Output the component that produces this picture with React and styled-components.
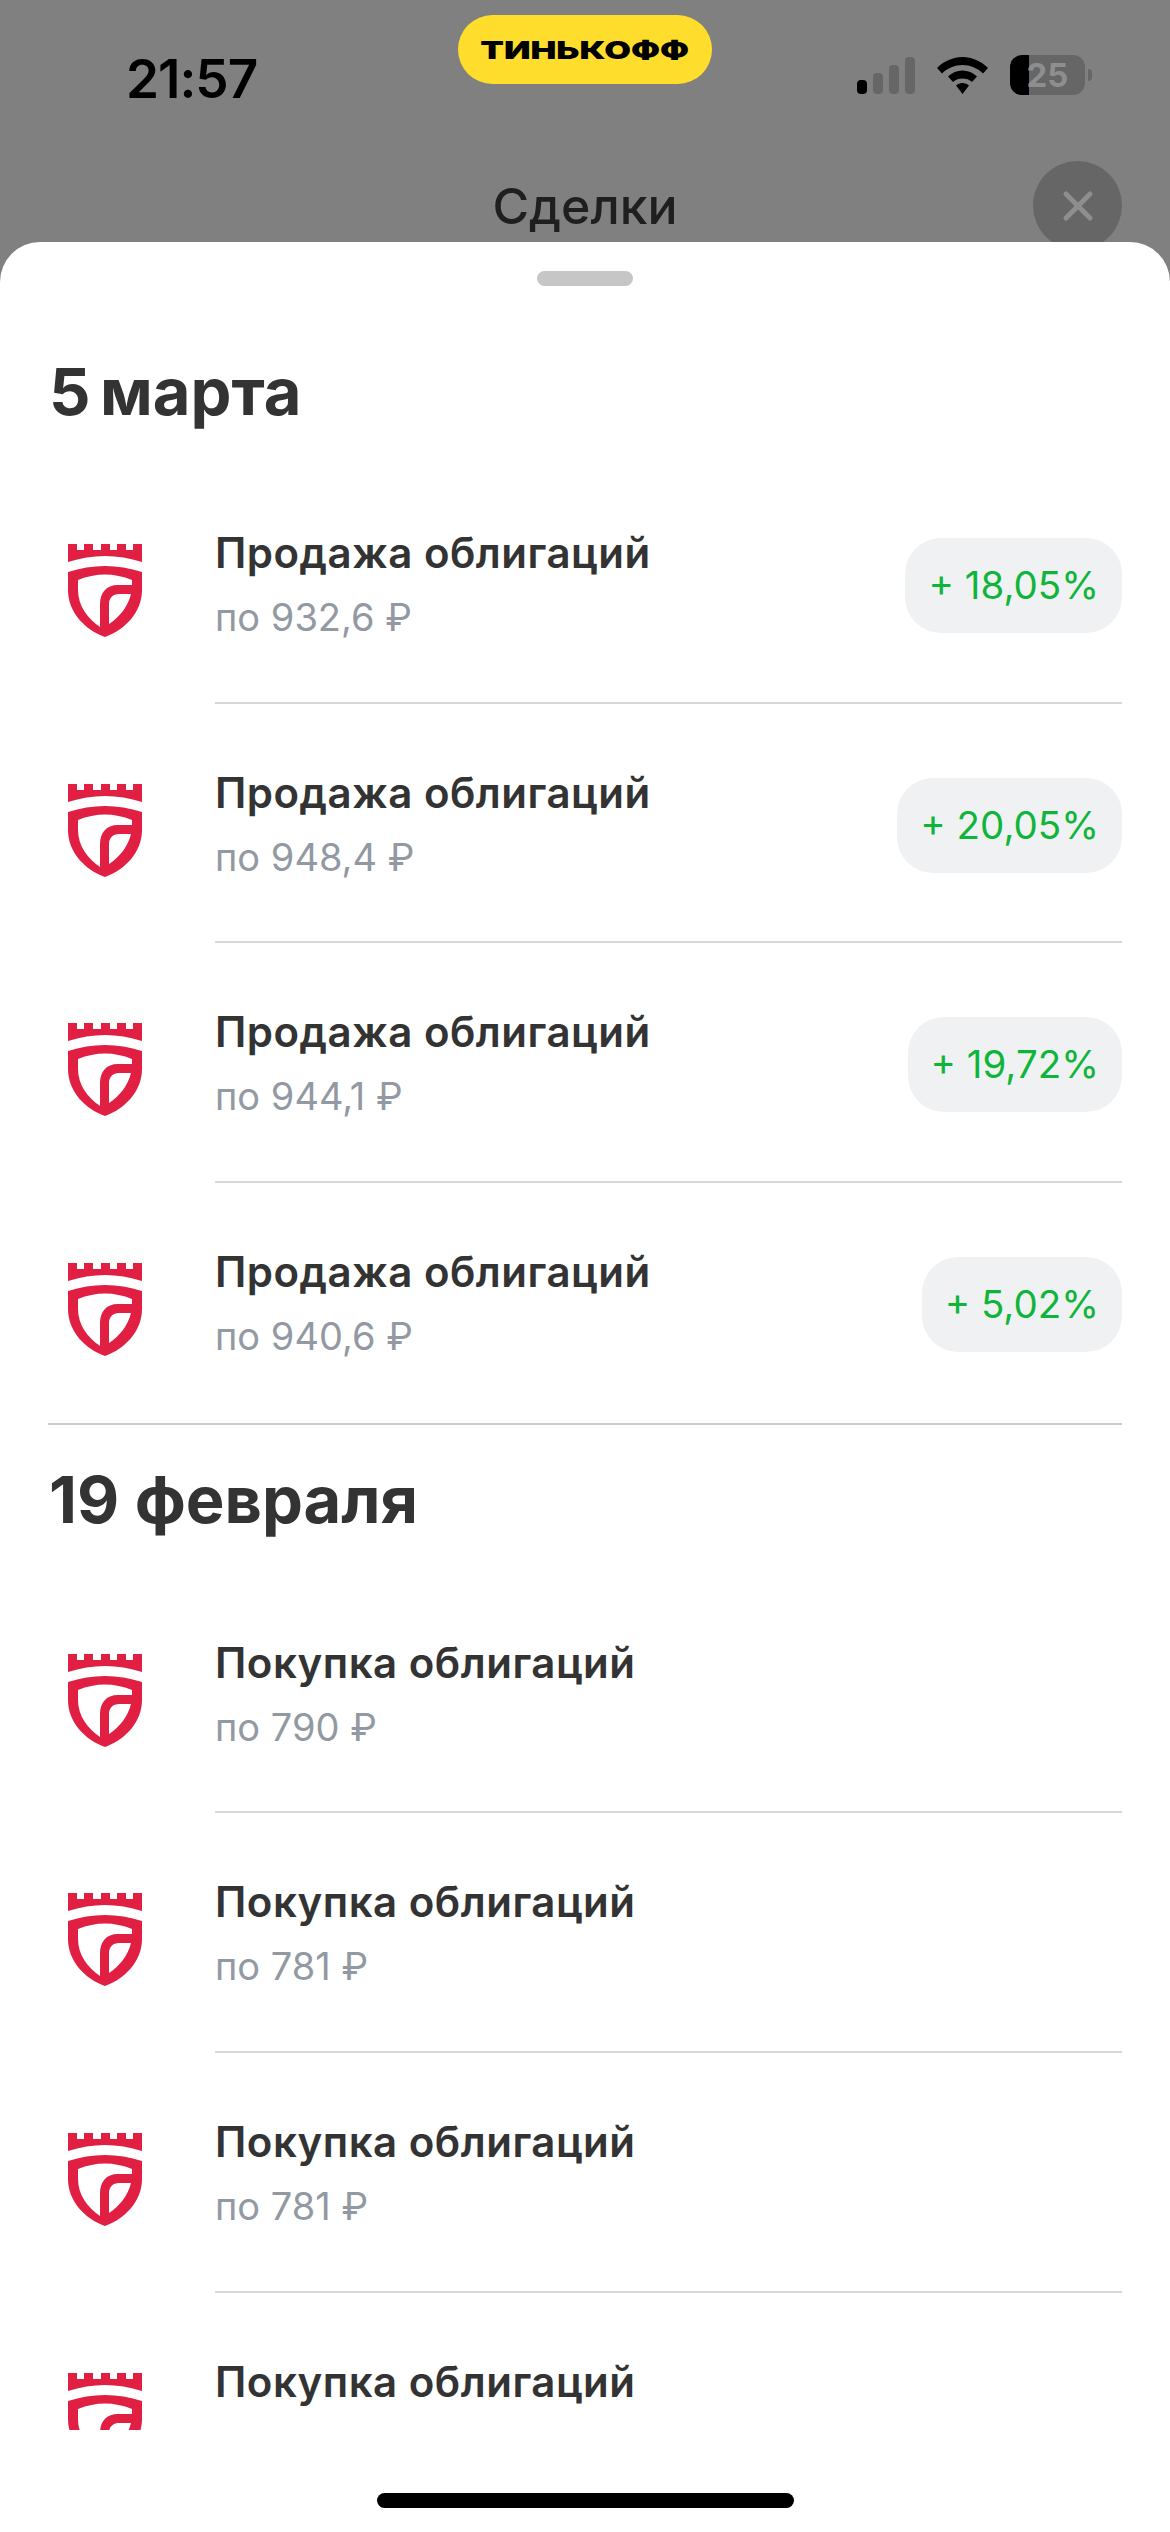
import React from "react";
import styled, { createGlobalStyle } from "styled-components";

const sections = [
  {
    title: "5 марта",
    deals: [
      { name: "Продажа облигаций", price: "по 932,6 ₽", gain: "+ 18,05%" },
      { name: "Продажа облигаций", price: "по 948,4 ₽", gain: "+ 20,05%" },
      { name: "Продажа облигаций", price: "по 944,1 ₽", gain: "+ 19,72%" },
      { name: "Продажа облигаций", price: "по 940,6 ₽", gain: "+ 5,02%" },
    ],
  },
  {
    title: "19 февраля",
    deals: [
      { name: "Покупка облигаций", price: "по 790 ₽" },
      { name: "Покупка облигаций", price: "по 781 ₽" },
      { name: "Покупка облигаций", price: "по 781 ₽" },
      { name: "Покупка облигаций" },
    ],
  },
];

export default function App() {
  return (
    <>
      <GlobalStyle />
      <Screen>
        <StatusBar>
          <Time>21:57</Time>
          <BankPill>
            <BankName>ТИНЬКОФФ</BankName>
          </BankPill>
          <StatusIcons>
            <SignalIcon />
            <WifiIcon />
            <Battery>
              <BatteryBody>25</BatteryBody>
              <BatteryNub />
            </Battery>
          </StatusIcons>
        </StatusBar>

        <TitleBar>
          <PageTitle>Сделки</PageTitle>
          <CloseButton>
            <svg width="32" height="32" viewBox="0 0 32 32">
              <path d="M4 4 L28 28 M28 4 L4 28" stroke="#8e8e8e" strokeWidth="5" strokeLinecap="round" />
            </svg>
          </CloseButton>
        </TitleBar>

        <Sheet>
          <Handle />
          <List>
            {sections.map((section, i) => (
              <Section key={section.title} $divided={i > 0}>
                <SectionTitle $first={i === 0}>{section.title}</SectionTitle>
                {section.deals.map((deal, j) => (
                  <Deal key={j}>
                    <LogoCell>
                      <ShieldLogo />
                    </LogoCell>
                    <DealBody $last={j === section.deals.length - 1}>
                      <DealText>
                        <DealName>{deal.name}</DealName>
                        {deal.price && <DealPrice>{deal.price}</DealPrice>}
                      </DealText>
                      {deal.gain && <Gain>{deal.gain}</Gain>}
                    </DealBody>
                  </Deal>
                ))}
              </Section>
            ))}
          </List>
          <HomeArea>
            <HomeIndicator />
          </HomeArea>
        </Sheet>
      </Screen>
    </>
  );
}

function ShieldLogo() {
  return (
    <svg width="74" height="93" viewBox="0 0 74 93">
      <path
        fill="#e01f42"
        d="M0 0 H9 V6 H16 V0 H25 V6 H33 V0 H42 V6 H49 V0 H58 V6 H65 V0 H74 V18 Q37 6 0 18 Z"
      />
      <path
        fill="#e01f42"
        fillRule="evenodd"
        d="M0 28 Q37 16 74 28 V46 C74 68 57 86 37 93 C17 86 0 68 0 46 Z
           M10 36 Q37 25 64 36 V41 H50 C38 41 32 49 32 60 V83 C20 75 10 62 10 46 Z
           M63 50 C60 62 52 73 41 80 V60 C41 54 45 50 51 50 Z"
      />
    </svg>
  );
}

function SignalIcon() {
  return (
    <svg width="58" height="37" viewBox="0 0 58 37">
      <rect x="0" y="23" width="10" height="14" rx="4" fill="#000" />
      <rect x="16" y="16" width="10" height="21" rx="4" fill="#666" />
      <rect x="32" y="8" width="10" height="29" rx="4" fill="#666" />
      <rect x="48" y="0" width="10" height="37" rx="4" fill="#666" />
    </svg>
  );
}

function WifiIcon() {
  return (
    <svg width="51" height="37" viewBox="0 0 51 37">
      <path
        fill="#000"
        d="M25.5 0 C35 0 44 4 51 11 L46 16.5 C40.5 11 33 8 25.5 8 C18 8 10.500 11 5 16.500 L0 11 C7 4 16 0 25.5 0 Z
           M25.5 13.500 C31 13.500 36 15.500 40 19.500 L35 25 C32.500 22.500 29 21.500 25.500 21.500 C22 21.500 18.500 22.500 16 25 L11 19.500 C15 15.500 20 13.500 25.500 13.500 Z
           M25.500 26 C28 26 30.500 27 32 28.500 L25.500 37 L19 28.500 C20.500 27 23 26 25.500 26 Z"
      />
    </svg>
  );
}

const GlobalStyle = createGlobalStyle`
  html, body {
    margin: 0;
    padding: 0;
    background: #fff;
  }
  body {
    font-family: Inter, "Liberation Sans", sans-serif;
  }
`;

const Screen = styled.div`
  width: 1170px;
  height: 2532px;
  background: #808080;
  overflow: hidden;
  display: flex;
  flex-direction: column;
`;

const StatusBar = styled.div`
  height: 110px;
  padding-top: 15px;
  box-sizing: border-box;
  display: grid;
  grid-template-columns: 1fr 254px 1fr;
`;

const Time = styled.div`
  margin: 35px 0 0 126px;
  font-size: 53px;
  line-height: 58px;
  font-weight: 600;
  letter-spacing: -1px;
  color: #000;
`;

const BankPill = styled.div`
  width: 254px;
  height: 69px;
  border-radius: 35px;
  background: #ffdd2d;
  display: flex;
  align-items: center;
  justify-content: center;
`;

const BankName = styled.span`
  display: inline-block;
  font-size: 25px;
  line-height: 30px;
  font-weight: 900;
  color: #000;
  transform: scaleX(1.38);
`;

const StatusIcons = styled.div`
  margin-top: 42px;
  padding-right: 78px;
  display: flex;
  align-items: flex-start;
  justify-content: flex-end;
  gap: 22px;
  height: 40px;
`;

const Battery = styled.div`
  display: flex;
  align-items: center;
  gap: 3px;
  margin-top: -2px;
`;

const BatteryBody = styled.div`
  width: 75px;
  height: 40px;
  border-radius: 12px;
  background: linear-gradient(90deg, #000 0 19px, #666 19px 100%);
  color: #8e8e8e;
  font-size: 33px;
  line-height: 40px;
  font-weight: 700;
  text-align: center;
`;

const BatteryNub = styled.div`
  width: 4px;
  height: 12px;
  border-radius: 0 4px 4px 0;
  background: #666;
`;

const TitleBar = styled.div`
  height: 132px;
  padding: 51px 48px 0 0;
  box-sizing: border-box;
  display: flex;
  justify-content: flex-end;
  position: relative;
`;

const PageTitle = styled.div`
  position: absolute;
  left: 0;
  right: 0;
  top: 67px;
  text-align: center;
  font-size: 50px;
  line-height: 58px;
  font-weight: 500;
  color: #1f1f1f;
`;

const CloseButton = styled.div`
  width: 89px;
  height: 89px;
  border-radius: 50%;
  background: #666;
  display: flex;
  align-items: center;
  justify-content: center;
`;

const Sheet = styled.div`
  position: relative;
  flex: 1;
  min-height: 0;
  background: #fff;
  border-radius: 40px 40px 0 0;
  display: flex;
  flex-direction: column;
  align-items: stretch;
`;

const Handle = styled.div`
  align-self: center;
  width: 96px;
  height: 15px;
  margin-top: 29px;
  border-radius: 8px;
  background: #c6c6c6;
  flex-shrink: 0;
`;

const List = styled.div`
  height: 2144px;
  overflow: hidden;
  flex-shrink: 0;
`;

const Section = styled.div`
  margin: 0 48px;
  ${(p) => p.$divided && "border-top: 2px solid #c9cbce;"}
`;

const SectionTitle = styled.h2`
  margin: ${(p) => (p.$first ? "68px" : "37px")} 0 ${(p) => (p.$first ? "34px" : "36px")} 1px;
  font-size: 65px;
  line-height: 76px;
  font-weight: 700;
  color: #333;
  word-spacing: ${(p) => (p.$first ? "-6px" : "0")};
`;

const Deal = styled.div`
  display: flex;
  height: 239.7px;
`;

const LogoCell = styled.div`
  width: 167px;
  padding: 80px 0 0 20px;
  box-sizing: border-box;
  flex-shrink: 0;
`;

const DealBody = styled.div`
  flex: 1;
  display: flex;
  justify-content: space-between;
  box-sizing: border-box;
  padding-top: 65px;
  ${(p) => !p.$last && "border-bottom: 2px solid #d5d7da;"}
`;

const DealText = styled.div`
  display: flex;
  flex-direction: column;
  gap: 16px;
`;

const DealName = styled.div`
  font-size: 42px;
  line-height: 48px;
  font-weight: 600;
  letter-spacing: 0.5px;
  color: #333;
`;

const DealPrice = styled.div`
  font-size: 38px;
  line-height: 48px;
  font-weight: 400;
  color: #9299a2;
`;

const Gain = styled.div`
  margin-top: 9px;
  height: 95px;
  padding: 0 23px;
  border-radius: 36px;
  background: #eff1f2;
  color: #0fb53a;
  font-size: 38.5px;
  line-height: 95px;
  font-weight: 400;
`;

const HomeArea = styled.div`
  flex: 1;
  display: flex;
  justify-content: center;
  align-items: flex-end;
  padding-bottom: 24px;
`;

const HomeIndicator = styled.div`
  width: 417px;
  height: 15px;
  border-radius: 8px;
  background: #000;
`;
